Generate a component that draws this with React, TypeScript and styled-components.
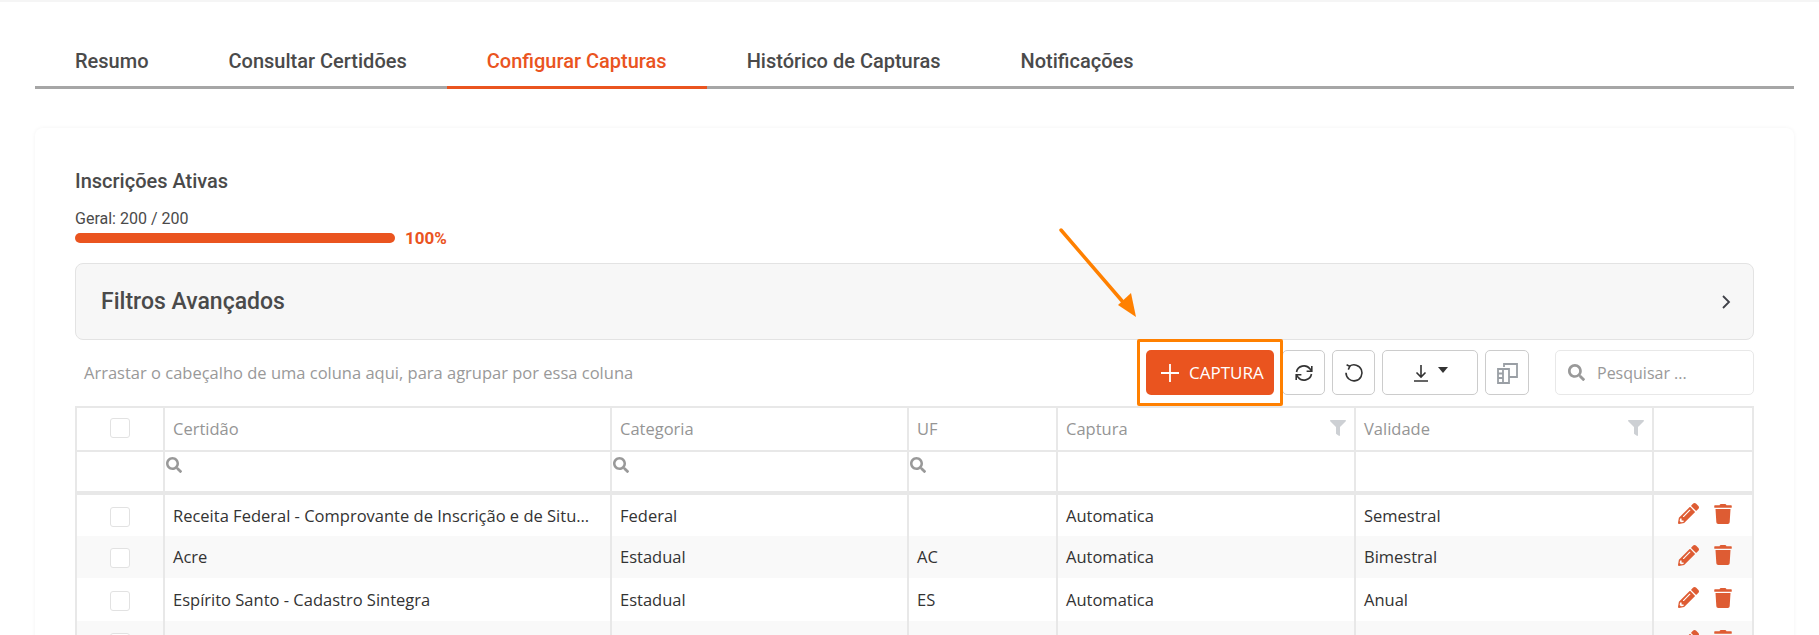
import styled, { createGlobalStyle } from "styled-components"
import { FaFilter, FaPencilAlt, FaTrash, FaSearch } from "react-icons/fa"

const ORANGE = "#ea541f"
const ICON_ORANGE = "#de5c33"
const HIGHLIGHT = "#ff8000"
const LINE = "#e8e8e8"

const GlobalStyle = createGlobalStyle`
	html, body {
		margin: 0;
		padding: 0;
		background: #fff;
	}
	* {
		box-sizing: border-box;
	}
`

const TABS = ["Resumo", "Consultar Certidões", "Configurar Capturas", "Histórico de Capturas", "Notificações"]

const ROWS = [
	{ name: "Receita Federal - Comprovante de Inscrição e de Situação Cadastral", category: "Federal", uf: "", capture: "Automatica", validity: "Semestral" },
	{ name: "Acre", category: "Estadual", uf: "AC", capture: "Automatica", validity: "Bimestral" },
	{ name: "Espírito Santo - Cadastro Sintegra", category: "Estadual", uf: "ES", capture: "Automatica", validity: "Anual" },
	{ name: "", category: "", uf: "", capture: "", validity: "" }
]

const App = () => (
	<Page>
		<GlobalStyle />
		<TabBar>
			{TABS.map(tab => (
				<Tab key={tab} $active={tab === "Configurar Capturas"}>
					{tab}
				</Tab>
			))}
		</TabBar>
		<Card>
			<Title>Inscrições Ativas</Title>
			<Usage>Geral: 200 / 200</Usage>
			<ProgressRow>
				<ProgressBar />
				<Percent>100%</Percent>
			</ProgressRow>
			<FilterPanel>
				<FilterTitle>Filtros Avançados</FilterTitle>
				<svg width="10" height="16" viewBox="0 0 10 16" fill="none" stroke="#3f4148" strokeWidth="1.8">
					<path d="M2 2l6 6-6 6" />
				</svg>
			</FilterPanel>
			<Toolbar>
				<GroupHint>Arrastar o cabeçalho de uma coluna aqui, para agrupar por essa coluna</GroupHint>
				<Highlighted>
					<AddButton>
						<svg width="20" height="20" viewBox="0 0 20 20" stroke="#fff" strokeWidth="1.8">
							<path d="M10 1v18M1 10h18" />
						</svg>
						CAPTURA
					</AddButton>
					<HighlightBox />
				</Highlighted>
				<ToolButton $width={43} $gap={-1}>
					<svg width="20" height="20" viewBox="0 0 20 20" fill="none" stroke="#333" strokeWidth="1.6">
						<path d="M2.5 9a7.6 7.6 0 0 1 13.4-3.2L17.5 8M17.5 11a7.6 7.6 0 0 1-13.4 3.2L2.5 12" />
						<path d="M17.8 3v5.3h-5.2M2.2 17v-5.3h5.2" />
					</svg>
				</ToolButton>
				<ToolButton $width={43}>
					<svg width="20" height="20" viewBox="0 0 20 20" fill="none" stroke="#333" strokeWidth="1.6">
						<path d="M5.5 3.2A8 8 0 1 1 2 9.8" />
						<path d="M2.6 1.8l3.2 1.6-1.5 3.3" />
					</svg>
				</ToolButton>
				<ToolButton $width={96}>
					<svg width="16" height="20" viewBox="0 0 16 20" fill="none" stroke="#333" strokeWidth="1.6">
						<path d="M8 2v12M3.5 9.5L8 14l4.5-4.5M1 18h14" />
					</svg>
					<Caret />
				</ToolButton>
				<ToolButton $width={44}>
					<svg width="22" height="22" viewBox="0 0 22 22" fill="none" stroke="#9a9fa5" strokeWidth="1.8">
						<path d="M8 5V2h13v13h-8" />
						<path d="M2 7h11v14H2zM2 11.5h5M2 16h5M7 7v14" />
					</svg>
				</ToolButton>
				<SearchBox>
					<FaSearch size={17} color="#999" />
					<SearchLabel>Pesquisar ...</SearchLabel>
				</SearchBox>
			</Toolbar>
			<Grid>
				<colgroup>
					<col width={88} />
					<col width={447} />
					<col width={297} />
					<col width={149} />
					<col width={298} />
					<col width={298} />
					<col />
				</colgroup>
				<thead>
					<tr>
						<HeadCell>
							<CheckBox />
						</HeadCell>
						<HeadCell>Certidão</HeadCell>
						<HeadCell>Categoria</HeadCell>
						<HeadCell>UF</HeadCell>
						<HeadCell>
							<HeadWithFilter>
								Captura
								<FaFilter size={16} color="#cdd0d4" />
							</HeadWithFilter>
						</HeadCell>
						<HeadCell>
							<HeadWithFilter>
								Validade
								<FaFilter size={16} color="#cdd0d4" />
							</HeadWithFilter>
						</HeadCell>
						<HeadCell />
					</tr>
					<tr>
						<FilterCell />
						<FilterCell>
							<FaSearch size={16} color="#999" />
						</FilterCell>
						<FilterCell>
							<FaSearch size={16} color="#999" />
						</FilterCell>
						<FilterCell>
							<FaSearch size={16} color="#999" />
						</FilterCell>
						<FilterCell />
						<FilterCell />
						<FilterCell />
					</tr>
				</thead>
				<tbody>
					{ROWS.map((row, i) => (
						<Row key={i} $alt={i % 2 === 1}>
							<Cell>
								<CheckBox />
							</Cell>
							<Cell>{row.name}</Cell>
							<Cell>{row.category}</Cell>
							<Cell>{row.uf}</Cell>
							<Cell>{row.capture}</Cell>
							<Cell>{row.validity}</Cell>
							<Cell>
								<Actions>
									<FaPencilAlt size={21} />
									<FaTrash size={20} />
								</Actions>
							</Cell>
						</Row>
					))}
				</tbody>
			</Grid>
			<Arrow width="90" height="100" viewBox="0 0 90 100">
				<path d="M2 3L70 82" stroke={HIGHLIGHT} strokeWidth="3.5" strokeLinecap="round" />
				<path d="M77 90L59 78L72 66Z" fill={HIGHLIGHT} />
			</Arrow>
		</Card>
	</Page>
)

export default App

const Page = styled.div`
	height: 635px;
	overflow: hidden;
	padding: 0 0 0 35px;
	border-top: 2px solid #f5f5f5;
	font-family: "Roboto", sans-serif;
`

const TabBar = styled.div`
	display: flex;
	width: 1759px;
	height: 87px;
	padding-top: 33px;
	border-bottom: 3px solid #a6a6a6;
`

const Tab = styled.div<{ $active: boolean }>`
	height: 54px;
	margin-bottom: -3px;
	padding: 14px 40px 0;
	border-bottom: 3px solid ${p => (p.$active ? ORANGE : "transparent")};
	color: ${p => (p.$active ? ORANGE : "#4a4a4a")};
	font-size: 20px;
	font-weight: 500;
	line-height: 24px;
`

const Card = styled.div`
	position: relative;
	width: 1759px;
	height: 600px;
	margin-top: 39px;
	padding: 41px 40px 0;
	border-radius: 8px;
	box-shadow: 0 0 4px rgba(0, 0, 0, 0.05);
`

const Title = styled.div`
	color: #4a4a4a;
	font-size: 20px;
	font-weight: 500;
	line-height: 24px;
`

const Usage = styled.div`
	margin-top: 16px;
	color: #4a4a4a;
	font-size: 16px;
	line-height: 20px;
`

const ProgressRow = styled.div`
	display: flex;
	align-items: center;
	gap: 10px;
	height: 20px;
	margin-top: -1px;
`

const ProgressBar = styled.div`
	width: 320px;
	height: 10px;
	border-radius: 5px;
	background: ${ORANGE};
`

const Percent = styled.span`
	color: ${ORANGE};
	font-size: 17px;
	font-weight: 700;
`

const FilterPanel = styled.div`
	display: flex;
	align-items: center;
	justify-content: space-between;
	height: 77px;
	margin-top: 15px;
	padding: 0 22px 0 25px;
	border: 1px solid #e3e3e3;
	border-radius: 8px;
	background: #f7f7f7;
`

const FilterTitle = styled.div`
	color: #4a4a4a;
	font-size: 23px;
	font-weight: 500;
`

const Toolbar = styled.div`
	display: flex;
	align-items: center;
	height: 45px;
	margin-top: 10px;
	font-family: "Open Sans", sans-serif;
`

const GroupHint = styled.div`
	flex: 1;
	padding-left: 9px;
	color: #999;
	font-size: 16.5px;
`

const Highlighted = styled.div`
	position: relative;
	margin-right: 9px;
`

const HighlightBox = styled.div`
	position: absolute;
	inset: -11px -9px -11px -9px;
	border: 3px solid ${HIGHLIGHT};
	border-radius: 2px;
	pointer-events: none;
`

const AddButton = styled.button`
	display: flex;
	align-items: center;
	gap: 9px;
	width: 128px;
	height: 45px;
	padding: 0 0 0 14px;
	border: 0;
	border-radius: 5px;
	background: ${ORANGE};
	color: #fff;
	font-family: "Open Sans", sans-serif;
	font-size: 17px;
`

const ToolButton = styled.button<{ $width: number; $gap?: number }>`
	display: flex;
	align-items: center;
	justify-content: center;
	gap: 9px;
	width: ${p => p.$width}px;
	height: 45px;
	margin-left: ${p => p.$gap ?? 7}px;
	padding: 0;
	border: 1px solid #ccc;
	border-radius: 5px;
	background: #fff;
`

const Caret = styled.span`
	width: 0;
	height: 0;
	margin-bottom: 6px;
	border-left: 5px solid transparent;
	border-right: 5px solid transparent;
	border-top: 6px solid #333;
`

const SearchBox = styled.div`
	display: flex;
	align-items: center;
	gap: 12px;
	width: 199px;
	height: 45px;
	margin-left: 26px;
	padding-left: 12px;
	border: 1px solid #e8e8e8;
	border-radius: 5px;
`

const SearchLabel = styled.span`
	color: #999;
	font-size: 16px;
`

const Grid = styled.table`
	width: 1679px;
	margin-top: 11px;
	border-collapse: collapse;
	table-layout: fixed;
	font-family: "Open Sans", sans-serif;
	font-size: 16.5px;
`

const HeadCell = styled.th`
	height: 44px;
	padding: 0 8px 2px;
	border: 2px solid ${LINE};
	color: #959595;
	font-weight: 400;
	text-align: left;
	&:first-child {
		padding-left: 33px;
	}
`

const HeadWithFilter = styled.div`
	display: flex;
	align-items: center;
	justify-content: space-between;
`

const FilterCell = styled.td`
	height: 42px;
	padding: 0 1px 10px;
	border: 2px solid ${LINE};
	border-bottom-width: 4px;
	vertical-align: middle;
`

const Row = styled.tr<{ $alt: boolean }>`
	height: 42.5px;
	background: ${p => (p.$alt ? "#f9f9f9" : "#fff")};
`

const Cell = styled.td`
	overflow: hidden;
	padding: 0 14px 0 8px;
	border-left: 2px solid ${LINE};
	border-right: 2px solid ${LINE};
	color: #333;
	text-overflow: ellipsis;
	white-space: nowrap;
	&:first-child {
		padding: 3px 0 0 33px;
	}
	&:last-child {
		padding-right: 8px;
	}
`

const CheckBox = styled.div`
	width: 20px;
	height: 20px;
	border: 1px solid #e2e2e2;
	border-radius: 3px;
	background: #fff;
`

const Actions = styled.div`
	display: flex;
	align-items: center;
	justify-content: flex-end;
	gap: 14px;
	margin-bottom: 3px;
	padding-right: 11px;
	color: ${ICON_ORANGE};
`

const Arrow = styled.svg`
	position: absolute;
	left: 1024px;
	top: 99px;
`
